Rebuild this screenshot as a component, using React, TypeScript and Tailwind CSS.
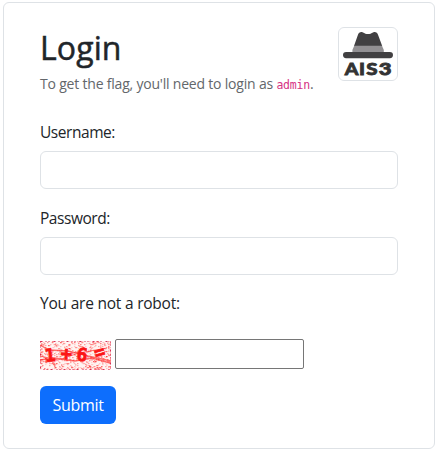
import React from "react";

function HatLogo() {
  return (
    <svg viewBox="0 0 60 54" className="block h-[54px] w-[60px]" aria-label="AIS3">
      <rect x="0.5" y="0.5" width="59" height="53" rx="5.5" fill="#fff" stroke="#dee2e6" />
      <path d="M16 19 L19.700 8.500 C20.700 5.500 22.200 4.800 24.500 5.200 C27 6.500 28 7 30 7 C32 7 33 6.500 35.500 5.200 C37.800 4.800 39.300 5.500 40.300 8.500 L44.200 19 Z" fill="#414042" />
      <path d="M16.200 18.700 H44 L45.800 23 V25.500 H14.400 V23 Z" fill="#929093" />
      <rect x="5" y="25" width="50" height="6.200" rx="3.100" fill="#414042" />
      <g fill="#333" stroke="#333" strokeWidth="0.800" fontFamily="Lato, sans-serif" fontWeight="900" fontSize="17.500">
        <text x="6.800" y="48.300" textLength="13.700" lengthAdjust="spacingAndGlyphs">A</text>
        <text x="21" y="48.300" textLength="6" lengthAdjust="spacingAndGlyphs">I</text>
        <text x="28.200" y="48.300" textLength="11.300" lengthAdjust="spacingAndGlyphs">S</text>
        <text x="40.700" y="48.300" textLength="12.800" lengthAdjust="spacingAndGlyphs">3</text>
      </g>
    </svg>
  );
}

function makeNoise() {
  let seed = 4217;
  const next = () => {
    seed = (seed * 16807) % 2147483647;
    return seed / 2147483647;
  };
  return Array.from({ length: 620 }, () => ({
    x: Math.floor(next() * 71),
    y: Math.floor(next() * 29),
    opacity: 0.08 + next() * 0.32,
  }));
}

const noise = makeNoise();

function Captcha() {
  return (
    <svg viewBox="0 0 71 29" className="block h-[29px] w-[71px]" aria-label="1+6=">
      <rect width="71" height="29" fill="#fff4f2" />
      {noise.map((dot, i) => (
        <rect key={i} x={dot.x} y={dot.y} width="1.500" height="1.200" fill="#f00" opacity={dot.opacity} />
      ))}
      <rect x="0.500" y="0.500" width="70" height="28" fill="none" stroke="#d01040" strokeOpacity="0.850" strokeDasharray="2 3 1 2 1 4" />
      <g fill="none" stroke="#ff1111" opacity="0.600">
        <path d="M0 4 L9 9 L28 10 L48 15 L71 20" strokeWidth="1.300" />
        <path d="M0 19 L14 17 L35 20 L52 17 L70 22" strokeWidth="1.600" />
        <path d="M0 15 L18 19 L39 12 L67 7" />
      </g>
      <g fill="#fb1515" stroke="#fb1515" strokeWidth="0.700" fontFamily="'DejaVu Sans Mono', monospace" fontWeight="700">
        <text x="4.500" y="20.500" fontSize="18" transform="rotate(-6 10 14)">1</text>
        <text x="20.500" y="19" fontSize="19" transform="rotate(3 26 14)">+</text>
        <text x="36.500" y="20" fontSize="18" transform="rotate(9 42 14)">6</text>
        <text x="54" y="17" fontSize="18" transform="rotate(-16 60 11)">=</text>
      </g>
    </svg>
  );
}

function Field({ label, id, type }: { label: string; id: string; type: string }) {
  return (
    <div className="mb-4 flex flex-col">
      <label htmlFor={id} className="mb-[7px] mt-px h-6 self-start text-[15.500px] leading-6 tracking-[-0.450px]">{label}</label>
      <input id={id} type={type} className="h-[38px] w-full rounded-md border border-[#dee2e6] bg-white px-3 outline-none" />
    </div>
  );
}

export default function App() {
  return (
    <div className="h-[449px] w-[438px] bg-white pl-[3px] pt-[2px] font-['Open_Sans','Noto_Sans',sans-serif] text-base text-[#212529]">
      <main className="h-[447px] w-[432px] rounded-md border border-[#dee2e6] px-9 pt-6">
        <header className="flex h-[92px] justify-between">
          <div className="whitespace-nowrap">
            <h1 className="mt-[2px] h-[38px] text-[32px] font-medium leading-[38px] tracking-[0.100px] [-webkit-text-stroke:0.500px_#212529]">Login</h1>
            <p className="mt-[6px] text-[14px] leading-[21px] tracking-[-0.200px] text-[#63676b]">
              To get the flag, you'll need to login as <code className="font-['DejaVu_Sans_Mono',monospace] text-[11.500px] tracking-[-0.200px] text-[#d63384]">admin</code>.
            </p>
          </div>
          <HatLogo />
        </header>
        <form onSubmit={(event) => event.preventDefault()}>
          <Field label="Username:" id="username" type="text" />
          <Field label="Password:" id="password" type="password" />
          <label htmlFor="answer" className="mb-6 block h-6 w-max text-[15.500px] leading-6 tracking-[-0.220px]">You are not a robot:</label>
          <div className="flex h-[31px] items-start gap-1">
            <div className="pt-[2px]"><Captcha /></div>
            <input id="answer" className="h-[30px] w-[189px] rounded-[2px] border border-[#767676] px-0.5 outline-none" />
          </div>
          <button type="submit" className="mt-4 h-[38px] w-[76px] rounded-md bg-[#0d6efd] text-center leading-[38px] tracking-[-0.300px] text-white">Submit</button>
        </form>
      </main>
    </div>
  );
}
